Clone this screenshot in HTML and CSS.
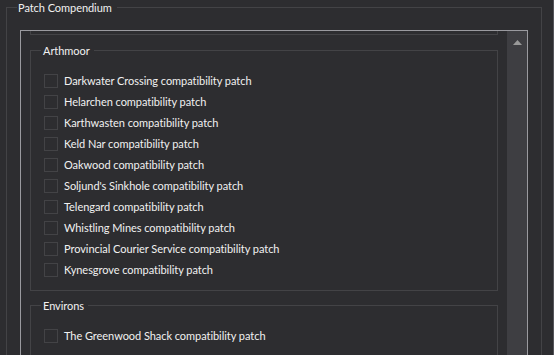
FILE: index.html
```html
<!DOCTYPE html>
<html>
<head>
<meta charset="utf-8">
<link rel="stylesheet" href="styles.css">
</head>
<body>
<div class="window">
  <fieldset class="outer">
    <legend class="outer-legend">Patch Compendium</legend>
    <div class="scrollview">
      <div class="scroll-content">
        <div class="prev-group"></div>
        <fieldset class="group">
          <legend class="group-legend">Arthmoor</legend>
          <div class="rows">
            <label class="row"><span class="check"></span><span class="label">Darkwater Crossing compatibility patch</span></label>
            <label class="row"><span class="check"></span><span class="label">Helarchen compatibility patch</span></label>
            <label class="row"><span class="check"></span><span class="label">Karthwasten compatibility patch</span></label>
            <label class="row"><span class="check"></span><span class="label">Keld Nar compatibility patch</span></label>
            <label class="row"><span class="check"></span><span class="label">Oakwood compatibility patch</span></label>
            <label class="row"><span class="check"></span><span class="label">Soljund's Sinkhole compatibility patch</span></label>
            <label class="row"><span class="check"></span><span class="label">Telengard compatibility patch</span></label>
            <label class="row"><span class="check"></span><span class="label">Whistling Mines compatibility patch</span></label>
            <label class="row"><span class="check"></span><span class="label">Provincial Courier Service compatibility patch</span></label>
            <label class="row"><span class="check"></span><span class="label">Kynesgrove compatibility patch</span></label>
          </div>
        </fieldset>
        <fieldset class="group">
          <legend class="group-legend">Environs</legend>
          <div class="rows">
            <label class="row"><span class="check"></span><span class="label">The Greenwood Shack compatibility patch</span></label>
          </div>
        </fieldset>
      </div>
      <div class="scrollbar">
        <svg class="arrow" width="9" height="5" viewBox="0 0 9 5"><polygon points="4.5,0 9,5 0,5" fill="#999999"/></svg>
      </div>
    </div>
  </fieldset>
</div>
</body>
</html>
```

FILE: styles.css
```css
html, body {
  margin: 0;
  padding: 0;
  background: #2d2d30;
  overflow: hidden;
}
body {
  width: 554px;
  height: 355px;
  font-family: "Lato", "Liberation Sans", sans-serif;
  font-size: 11px;
  letter-spacing: -0.05px;
  color: #f1f1f1;
}
.window {
  width: 553px;
  height: 355px;
  border-right: 1px solid #55555a;
  overflow: hidden;
}
.outer {
  margin: 0 0 0 6px;
  width: 536px;
  box-sizing: border-box;
  border: 1px solid #434346;
  padding: 15px 13px 0 10px;
  height: 400px;
  min-width: 0;
}
.outer-legend {
  padding: 0 5px 0 1px;
  height: 15px;
  line-height: 15px;
}
.scrollview {
  margin-left: 3px;
  width: 508px;
  height: 340px;
  box-sizing: border-box;
  border: 1px solid #9a9a9f;
  display: flex;
  overflow: hidden;
}
.scroll-content {
  flex: 1;
  padding: 0 9px;
  display: flex;
  flex-direction: column;
  gap: 7px;
}
.prev-group {
  height: 3px;
  border: 1px solid #434346;
  border-top: none;
  margin-bottom: 1px;
  flex: none;
}
.scrollbar {
  width: 20px;
  flex: none;
  background: #3e3e42;
  display: flex;
  justify-content: center;
  padding-top: 9px;
  box-sizing: border-box;
}
.arrow {
  display: block;
  margin-left: 1px;
}
.group {
  margin: 0;
  border: 1px solid #434346;
  padding: 16px 10px 13px 10px;
  min-width: 0;
  flex: none;
}
.group-legend {
  padding: 0 4px 0 2px;
  height: 15px;
  line-height: 15px;
}
.rows {
  display: flex;
  flex-direction: column;
  gap: 7px;
  padding-left: 3px;
}
.row {
  display: flex;
  align-items: center;
  height: 14px;
  gap: 6px;
}
.check {
  width: 14px;
  height: 14px;
  box-sizing: border-box;
  border: 1px solid #434346;
  flex: none;
}
.label {
  line-height: 14px;
  white-space: nowrap;
}
```
